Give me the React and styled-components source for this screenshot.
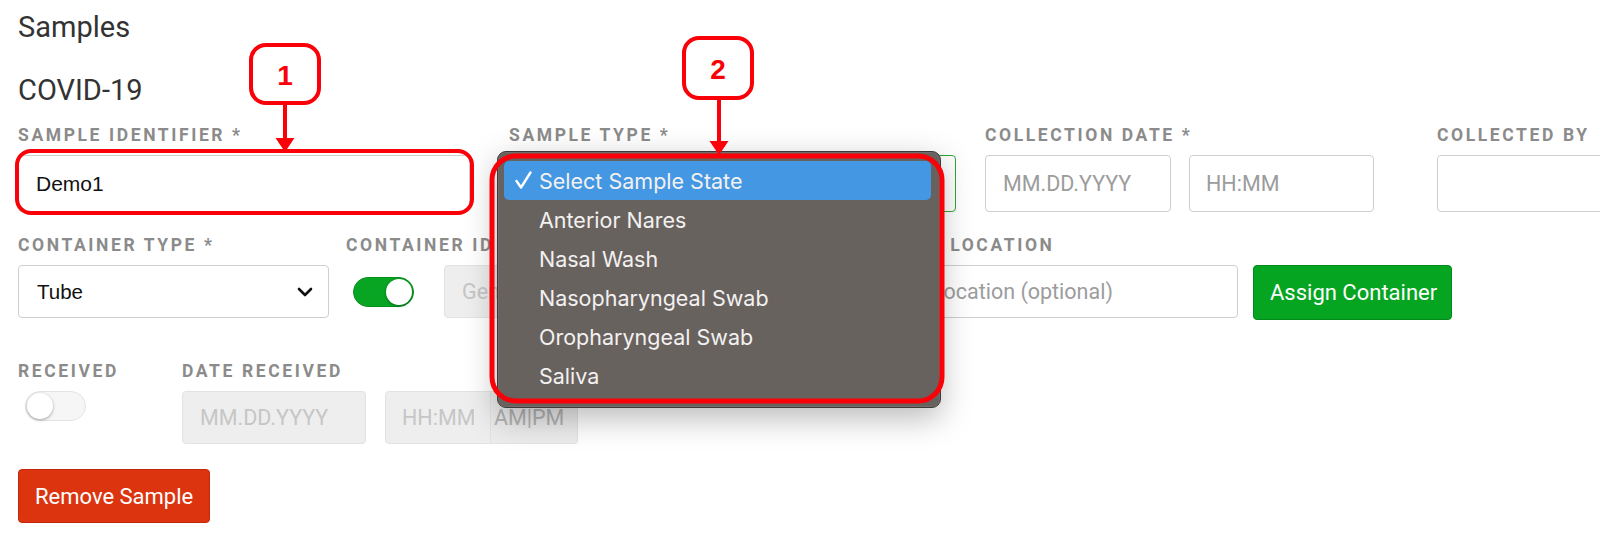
import React from "react";
import styled, { createGlobalStyle } from "styled-components";

const GlobalStyle = createGlobalStyle`
  html, body { margin: 0; padding: 0; background: #fff; }
  body { font-family: Roboto, "Liberation Sans", Arial, sans-serif; }
`;

const Page = styled.div`
  position: relative;
  width: 1600px;
  height: 541px;
  overflow: hidden;
  box-sizing: border-box;
  padding: 10px 0 0 18px;
`;

const Title = styled.h2`
  margin: 0 0 ${({ $mb }) => $mb}px;
  font-size: 29px;
  font-weight: 400;
  line-height: 35px;
  color: #333;
`;

const Row = styled.div`
  display: flex;
  align-items: flex-start;
  margin-bottom: ${({ $mb }) => $mb}px;
`;

const Field = styled.div`
  position: relative;
  flex: 0 0 auto;
  width: ${({ $w }) => $w}px;
  margin-left: ${({ $ml }) => $ml || 0}px;
`;

const Label = styled.div`
  font-size: 17.5px;
  font-weight: 700;
  letter-spacing: 2.6px;
  line-height: 18px;
  color: #8b8b8b;
  text-transform: uppercase;
  white-space: nowrap;
  margin-bottom: 11px;
`;

const Controls = styled.div`
  display: flex;
  align-items: center;
  gap: ${({ $gap }) => $gap || 0}px;
`;

const TextInput = styled.input`
  box-sizing: border-box;
  width: ${({ $w }) => ($w ? `${$w}px` : "100%")};
  height: ${({ $h }) => $h || 53}px;
  margin: 0;
  padding: 0 ${({ $pad }) => $pad || 17}px;
  border: 1px solid ${({ disabled }) => (disabled ? "#e2e2e2" : "#cfcfcf")};
  border-radius: ${({ $flatRight }) => ($flatRight ? "4px 0 0 4px" : "4px")};
  background: ${({ disabled }) => (disabled ? "#eeeeee" : "#fff")};
  font-family: "Liberation Sans", Arial, sans-serif;
  font-size: 21px;
  color: #111;
  outline: none;

  &::placeholder {
    font-family: Roboto, sans-serif;
    font-size: 21.5px;
    color: ${({ disabled }) => (disabled ? "#c6c6c6" : "#9c9c9c")};
  }
`;

const Addon = styled.div`
  box-sizing: border-box;
  width: 87px;
  height: 53px;
  display: flex;
  align-items: center;
  padding-left: 3px;
  background: #ececec;
  border: 1px solid #e2e2e2;
  border-left: none;
  border-radius: 0 4px 4px 0;
  font-size: 21.5px;
  color: #b3b3b3;
`;

const SelectBox = styled.div`
  position: relative;
  box-sizing: border-box;
  height: ${({ $h }) => $h || 53}px;
  display: flex;
  align-items: center;
  justify-content: space-between;
  padding: 0 15px 0 18px;
  border: 1px solid ${({ $ok }) => ($ok ? "#2fa836" : "#cfcfcf")};
  border-radius: 4px;
  background: #fff;
  font-family: "Liberation Sans", Arial, sans-serif;
  font-size: 20.5px;
  color: #111;
`;

const Toggle = styled.div`
  position: relative;
  flex: 0 0 auto;
  box-sizing: border-box;
  width: 61px;
  height: 30px;
  margin: ${({ $mt }) => $mt || 0}px 0 0 7px;
  border-radius: 15px;
  background: ${({ $on }) => ($on ? "#08a523" : "#f6f6f6")};
  border: 1px solid ${({ $on }) => ($on ? "#079020" : "#e3e3e3")};

  &::after {
    content: "";
    position: absolute;
    top: 1px;
    ${({ $on }) => ($on ? "right: 1px;" : "left: 1px;")}
    width: 26px;
    height: 26px;
    border-radius: 50%;
    background: #fff;
    box-shadow: 0 1px 3px rgba(0, 0, 0, 0.35);
  }
`;

const Button = styled.button`
  box-sizing: border-box;
  height: ${({ $h }) => $h || 54}px;
  width: ${({ $w }) => ($w ? `${$w}px` : "auto")};
  padding: 0 16px;
  border-radius: 4px;
  border: 1px solid ${({ $variant }) => ($variant === "danger" ? "#c2290b" : "#038a1b")};
  background: ${({ $variant }) => ($variant === "danger" ? "#dd3410" : "#05a521")};
  color: #fff;
  font-family: Roboto, sans-serif;
  font-size: 22px;
  font-weight: 400;
  white-space: nowrap;
  cursor: pointer;
`;

const Menu = styled.div`
  position: absolute;
  left: -13px;
  top: -5px;
  z-index: 5;
  box-sizing: border-box;
  width: 444px;
  padding: 9px 9px 12px 6px;
  background: #68625f;
  border: 1px solid #3e3a39;
  border-radius: 9px;
  box-shadow: 0 10px 32px rgba(0, 0, 0, 0.28), inset 0 0 0 1px rgba(255, 255, 255, 0.07);
`;

const MenuItem = styled.div`
  display: flex;
  align-items: center;
  height: 39px;
  padding-left: 11px;
  border-radius: 5px;
  background: ${({ $active }) => ($active ? "#4497e3" : "transparent")};
  font-family: Inter, "Noto Sans", sans-serif;
  font-size: 21.5px;
  color: #f3f1f0;
  white-space: nowrap;
`;

const CheckSlot = styled.span`
  display: inline-flex;
  width: 24px;
`;

const Overlay = styled.svg`
  position: absolute;
  left: 0;
  top: 0;
  z-index: 10;
  pointer-events: none;
`;

const Chevron = () => (
  <svg width="16" height="10" viewBox="0 0 16 10">
    <polyline points="2,2 8,8 14,2" fill="none" stroke="#111" strokeWidth="2.6" strokeLinecap="round" strokeLinejoin="round" />
  </svg>
);

const Check = () => (
  <svg width="17" height="19" viewBox="0 0 17 19">
    <polyline points="1.5,10 6,16.5 15.5,1.5" fill="none" stroke="#fff" strokeWidth="2.4" strokeLinecap="round" strokeLinejoin="round" />
  </svg>
);

const sampleTypes = [
  "Select Sample State",
  "Anterior Nares",
  "Nasal Wash",
  "Nasopharyngeal Swab",
  "Oropharyngeal Swab",
  "Saliva",
];

const RED = "#fa0008";

const Annotations = () => (
  <Overlay width="1600" height="541" viewBox="0 0 1600 541">
    <rect x="17" y="151" width="455" height="62" rx="14" fill="none" stroke={RED} strokeWidth="4" />
    <rect x="251" y="45" width="68" height="58" rx="15" fill="#fff" stroke={RED} strokeWidth="4" />
    <text x="285" y="85" textAnchor="middle" fill={RED} fontFamily="Liberation Sans, Arial, sans-serif" fontWeight="700" fontSize="28">1</text>
    <line x1="285" y1="103" x2="285" y2="140" stroke={RED} strokeWidth="4" />
    <polygon points="275.5,138 294.5,138 285,152" fill={RED} />

    <rect x="492" y="156" width="450" height="245" rx="24" fill="none" stroke={RED} strokeWidth="5" />
    <rect x="684" y="38" width="68" height="60" rx="15" fill="#fff" stroke={RED} strokeWidth="4" />
    <text x="718" y="79" textAnchor="middle" fill={RED} fontFamily="Liberation Sans, Arial, sans-serif" fontWeight="700" fontSize="28">2</text>
    <line x1="719" y1="98" x2="719" y2="143" stroke={RED} strokeWidth="4" />
    <polygon points="709.5,141 728.5,141 719,155" fill={RED} />
  </Overlay>
);

export default function App() {
  return (
    <>
      <GlobalStyle />
      <Page>
        <Title $mb={28}>Samples</Title>
        <Title $mb={18}>COVID-19</Title>

        <Row $mb={24}>
          <Field $w={452}>
            <Label>Sample Identifier *</Label>
            <TextInput $h={57} defaultValue="Demo1" />
          </Field>
          <Field $w={447} $ml={39}>
            <Label>Sample Type *</Label>
            <SelectBox $ok $h={57}>
              <span />
              <Chevron />
              <Menu>
                {sampleTypes.map((t, i) => (
                  <MenuItem key={t} $active={i === 0}>
                    <CheckSlot>{i === 0 && <Check />}</CheckSlot>
                    {t}
                  </MenuItem>
                ))}
              </Menu>
            </SelectBox>
          </Field>
          <Field $w={389} $ml={29}>
            <Label>Collection Date *</Label>
            <Controls $gap={18}>
              <TextInput $h={57} $w={186} placeholder="MM.DD.YYYY" />
              <TextInput $h={57} $w={185} $pad={16} placeholder="HH:MM" />
            </Controls>
          </Field>
          <Field $w={250} $ml={63}>
            <Label>Collected By</Label>
            <TextInput $h={57} />
          </Field>
        </Row>

        <Row $mb={42}>
          <Field $w={311}>
            <Label>Container Type *</Label>
            <SelectBox>
              <span>Tube</span>
              <Chevron />
            </SelectBox>
          </Field>
          <Field $w={484} $ml={17}>
            <Label>Container ID</Label>
            <Controls $gap={30}>
              <Toggle $on />
              <TextInput $w={386} disabled placeholder="Generate ID" />
            </Controls>
          </Field>
          <Field $w={391} $ml={17}>
            <Label>Storage Location</Label>
            <TextInput $pad={11} placeholder="Storage location (optional)" />
          </Field>
          <Field $w={199} $ml={15}>
            <Label>&nbsp;</Label>
            <Button $variant="success" $w={199} $h={55}>Assign Container</Button>
          </Field>
        </Row>

        <Row $mb={25}>
          <Field $w={164}>
            <Label>Received</Label>
            <Toggle $mt={2} />
          </Field>
          <Field $w={400}>
            <Label>Date Received</Label>
            <Controls $gap={19}>
              <TextInput $w={184} disabled placeholder="MM.DD.YYYY" />
              <Controls>
                <TextInput $w={106} $pad={16} disabled $flatRight placeholder="HH:MM" />
                <Addon>AM|PM</Addon>
              </Controls>
            </Controls>
          </Field>
        </Row>

        <Button $variant="danger">Remove Sample</Button>

        <Annotations />
      </Page>
    </>
  );
}
